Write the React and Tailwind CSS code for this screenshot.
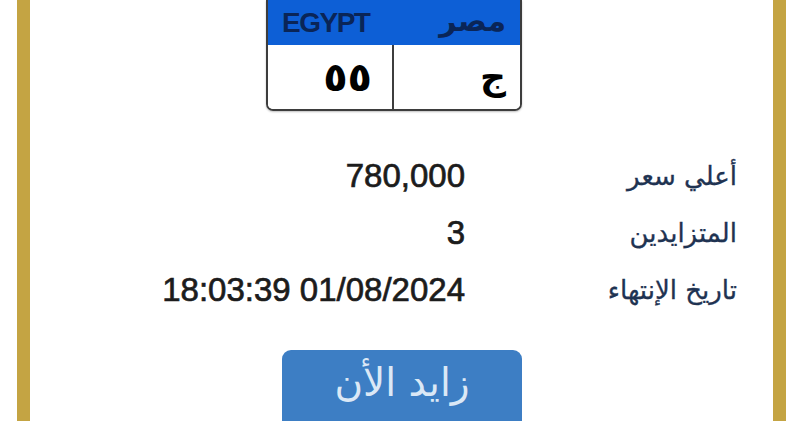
const ROWS = [
  ['أعلي سعر', '780,000'],
  ['المتزايدين', '3'],
  ['تاريخ الإنتهاء', '18:03:39 01/08/2024'],
]

function Plate() {
  return (
    <div className="ml-[236px] w-[256px] h-[111px] flex flex-col border-x-2 border-b-2 border-[#3d3d3d] rounded-b-[7px] overflow-hidden shadow-[0_1px_2px_rgba(0,0,0,0.25)]">
      <div className="h-[45px] bg-[#0d5fd6] flex items-center justify-between px-[14px]" dir="ltr">
        <span className="text-[28px] font-bold tracking-[-1.5px] text-[#0a2557] leading-none" style={{ fontFamily: '"Liberation Sans", Arial, sans-serif' }}>EGYPT</span>
        <span className="text-[30px] font-bold text-[#0a2557] leading-none -mt-[4px]" style={{ fontFamily: '"DejaVu Sans", sans-serif' }}>مصر</span>
      </div>
      <div className="flex-1 flex bg-white" dir="ltr">
        <div className="w-[126px] border-r-2 border-[#3d3d3d] flex items-center justify-end pr-[20px]">
          <span className="text-[40px] font-bold text-black leading-none" style={{ fontFamily: '"DejaVu Sans", sans-serif' }}>٥٥</span>
        </div>
        <div className="flex-1 flex items-center justify-end pr-[14px]">
          <span className="text-[36px] font-bold text-black leading-none" style={{ fontFamily: '"DejaVu Sans", sans-serif' }}>ج</span>
        </div>
      </div>
    </div>
  )
}

export default function App() {
  return (
    <div className="w-[800px] h-[421px] bg-white overflow-hidden pl-[17px] pr-[14px]">
      <div className="h-full border-x-[13px] border-[#c4a443] flex flex-col">
        <Plate />
        <div dir="rtl" className="mt-[36px] mr-[36px] grid grid-cols-[272px_auto] auto-rows-[57px] items-center justify-start">
          {ROWS.map(([label, value]) => (
            <div key={label} className="contents">
              <span className="text-[26px] text-[#1f3352] leading-none [-webkit-text-stroke:0.3px_#1f3352]" style={{ fontFamily: '"DejaVu Sans", sans-serif' }}>{label}</span>
              <span dir="ltr" className="text-[33px] text-[#1c1c1c] leading-none text-right [-webkit-text-stroke:0.7px_#1c1c1c]" style={{ fontFamily: '"Liberation Sans", Arial, sans-serif' }}>{value}</span>
            </div>
          ))}
        </div>
        <button className="mt-[32px] ml-[252px] w-[240px] flex-1 bg-[#3d7ec4] rounded-t-[9px] flex items-start justify-center pt-[13px]">
          <span className="text-[39px] text-[#dbe8f6] leading-none" style={{ fontFamily: '"DejaVu Sans", sans-serif' }}>زايد الأن</span>
        </button>
      </div>
    </div>
  )
}
